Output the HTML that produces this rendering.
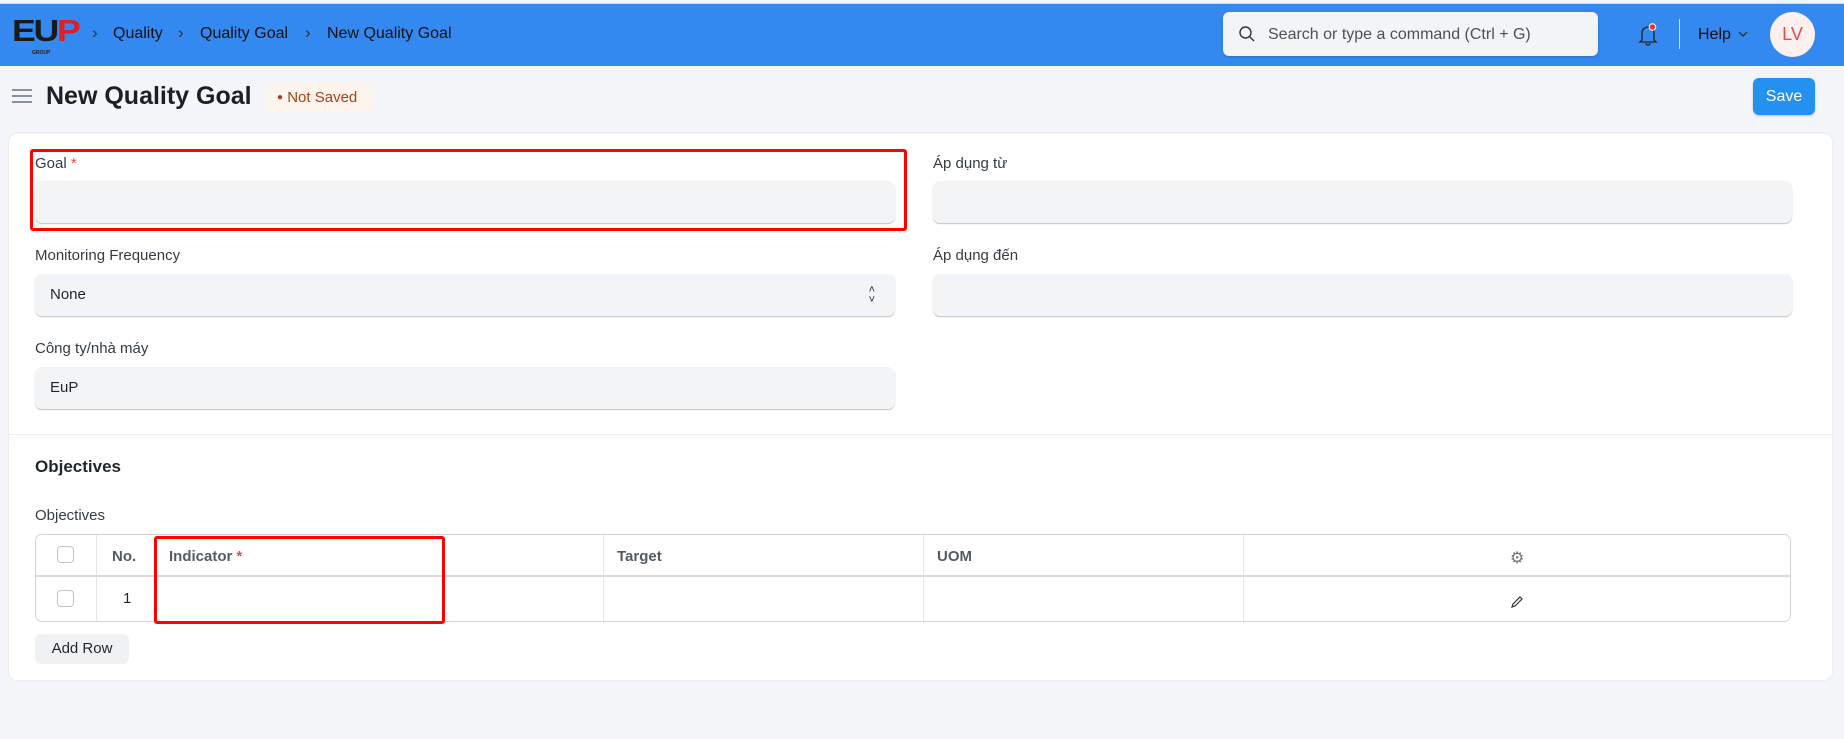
<!DOCTYPE html>
<html><head><meta charset="utf-8"><style>
*{box-sizing:border-box;margin:0;padding:0}
body{width:1844px;height:739px;background:#f3f5f8;font-family:"Liberation Sans",sans-serif;position:relative;overflow:hidden;color:#1f272e}
.a{position:absolute}
.nav{left:0;top:3px;width:1844px;height:63px;background:#3389ef;border-top:1px solid #d8d8d8}
.bc{top:25px;font-size:16px;color:#111}
.ch{top:23px;font-size:17px;color:#333}
.lbl{font-size:15px;color:#333c44}
.inp{background:#f3f4f6;border-radius:7px;box-shadow:0 1px 1px rgba(0,0,0,.25);height:42px}
.card{left:9px;top:134px;width:1823px;height:546px;background:#fff;border-radius:8px;box-shadow:0 0 2px rgba(0,0,0,.1)}
.red{border:3px solid #f00;border-radius:3px}
.th{font-size:15px;font-weight:bold;color:#525c66;top:548px}
.vl{top:535px;width:1px;height:86px;background:#e4e6e9}
.cb{width:17px;height:17px;border:1px solid #c0c4c8;border-radius:4px;background:#fff}
</style></head><body>
<div class="a nav"></div>
<div class="a" style="left:12px;top:15px;font-weight:900;font-size:31px;letter-spacing:-2px;color:#1a1a1a;line-height:32px;transform:scaleX(1.15);transform-origin:left">EU<span style="color:#e01e25">P</span></div>
<div class="a" style="left:32px;top:50px;font-size:5px;font-weight:bold;color:#222">GROUP</div>
<div class="a ch" style="left:92px">›</div><div class="a bc" style="left:113px">Quality</div>
<div class="a ch" style="left:178px">›</div><div class="a bc" style="left:200px">Quality Goal</div>
<div class="a ch" style="left:305px">›</div><div class="a bc" style="left:327px">New Quality Goal</div>
<div class="a" style="left:1223px;top:12px;width:375px;height:44px;background:#f3f4f6;border-radius:6px;box-shadow:0 1px 2px rgba(0,0,0,.2)"></div>
<svg class="a" style="left:1238px;top:25px" width="18" height="18" viewBox="0 0 18 18"><circle cx="7.5" cy="7.5" r="5.5" fill="none" stroke="#333" stroke-width="1.4"/><path d="M11.5 11.5L16 16" stroke="#333" stroke-width="1.4"/></svg>
<div class="a" style="left:1268px;top:26px;font-size:16px;color:#4a5158">Search or type a command (Ctrl + G)</div>
<svg class="a" style="left:1637px;top:22px" width="22" height="26" viewBox="0 0 22 26"><path d="M5 18V11a6 6 0 0 1 12 0v7l2 2H3z M9 21a2 2 0 0 0 4 0" fill="none" stroke="#222" stroke-width="1.3"/><circle cx="15.5" cy="5" r="3.3" fill="#e53935" stroke="#fff" stroke-width="1"/></svg>
<div class="a" style="left:1679px;top:19px;width:1px;height:30px;background:#cfe0f7"></div>
<div class="a" style="left:1698px;top:26px;font-size:16px;color:#111">Help</div>
<svg class="a" style="left:1738px;top:31px" width="10" height="7" viewBox="0 0 10 7"><path d="M1 1l4 4 4-4" fill="none" stroke="#222" stroke-width="1.2"/></svg>
<div class="a" style="left:1770px;top:12px;width:45px;height:45px;border-radius:50%;background:#fdf0ef;color:#e5484d;font-size:18px;text-align:center;line-height:45px">LV</div>
<div class="a" style="left:12px;top:89px;width:20px;height:2px;background:#8a939b;box-shadow:0 6px 0 #8a939b,0 12px 0 #8a939b"></div>
<div class="a" style="left:46px;top:82px;font-size:25px;font-weight:bold;color:#1a2026">New Quality Goal</div>
<div class="a" style="left:265px;top:83px;width:109px;height:29px;background:#fef4ee;border-radius:6px;color:#a3411b;font-size:15px;line-height:29px;padding-left:12px"><span style="font-size:10px;vertical-align:2px">●</span> Not Saved</div>
<div class="a" style="left:1753px;top:78px;width:62px;height:37px;background:#2490ef;border-radius:6px;color:#fff;font-size:16px;text-align:center;line-height:37px;box-shadow:0 1px 2px rgba(0,0,0,.2)">Save</div>
<div class="a card"></div>
<div class="a lbl" style="left:35px;top:155px">Goal <span style="color:#e24c4c">*</span></div>
<div class="a inp" style="left:35px;top:181px;width:860px"></div>
<div class="a red" style="left:30px;top:149px;width:877px;height:82px"></div>
<div class="a lbl" style="left:933px;top:155px">Áp dụng từ</div>
<div class="a inp" style="left:933px;top:181px;width:859px"></div>
<div class="a lbl" style="left:35px;top:247px">Monitoring Frequency</div>
<div class="a inp" style="left:35px;top:274px;width:860px;font-size:15px;line-height:42px;padding-left:15px">None<span style="position:absolute;right:20px;top:0;font-size:11px;line-height:10px;padding-top:11px">˄<br>˅</span></div>
<div class="a lbl" style="left:933px;top:247px">Áp dụng đến</div>
<div class="a inp" style="left:933px;top:274px;width:859px"></div>
<div class="a lbl" style="left:35px;top:340px">Công ty/nhà máy</div>
<div class="a inp" style="left:35px;top:367px;width:860px;font-size:15px;line-height:42px;padding-left:15px">EuP</div>
<div class="a" style="left:9px;top:434px;width:1823px;height:1px;background:#eceef0"></div>
<div class="a" style="left:35px;top:457px;font-size:17px;font-weight:bold">Objectives</div>
<div class="a lbl" style="left:35px;top:507px">Objectives</div>
<div class="a" style="left:35px;top:534px;width:1756px;height:88px;border:1px solid #d1d5d9;border-radius:7px"></div>
<div class="a" style="left:36px;top:575px;width:1754px;height:2px;background:#d8dbde"></div>
<div class="a vl" style="left:96px"></div><div class="a vl" style="left:155px"></div><div class="a vl" style="left:603px"></div><div class="a vl" style="left:923px"></div><div class="a vl" style="left:1243px"></div>
<div class="a cb" style="left:57px;top:546px"></div><div class="a cb" style="left:57px;top:590px"></div>
<div class="a th" style="left:112px">No.</div>
<div class="a th" style="left:169px">Indicator <span style="color:#e24c4c">*</span></div>
<div class="a th" style="left:617px">Target</div>
<div class="a th" style="left:937px">UOM</div>
<div class="a" style="left:1510px;top:548px;font-size:16px;color:#6b747c">⚙</div>
<div class="a" style="left:123px;top:590px;font-size:15px">1</div>
<svg class="a" style="left:1510px;top:595px" width="14" height="14" viewBox="0 0 14 14"><path d="M2 12l1-3 7-7 2 2-7 7z" fill="none" stroke="#333" stroke-width="1.2"/></svg>
<div class="a red" style="left:154px;top:536px;width:291px;height:88px"></div>
<div class="a" style="left:35px;top:634px;width:94px;height:30px;background:#f0f1f3;border-radius:6px;font-size:15px;text-align:center;line-height:30px">Add Row</div>
</body></html>
